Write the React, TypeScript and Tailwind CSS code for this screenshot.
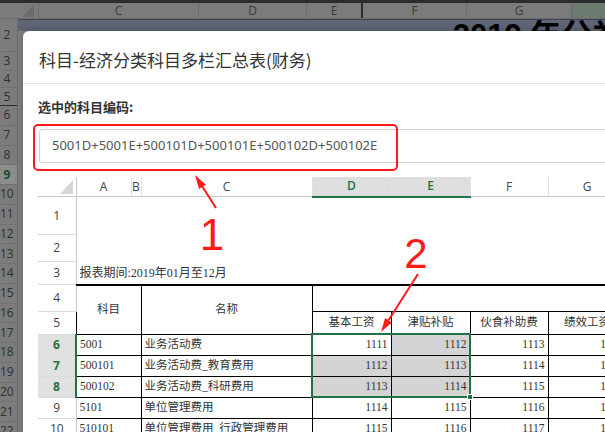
import type { ReactNode } from 'react';

const GREEN = '#217346';

const bgRows: { n: number; h: string; active?: boolean }[] = [
  { n: 2, h: 'h-[33px]' },
  { n: 3, h: 'h-[19px]' },
  { n: 4, h: 'h-[17px]' },
  { n: 5, h: 'h-[18px]' },
  ...Array.from({ length: 17 }, (_, i) => ({ n: 6 + i, h: 'h-[19.75px]', active: 6 + i === 9 })),
];

const dataRows = [
  { code: '5001', name: '业务活动费', vals: [1111, 1112, 1113, 1114], sel: true },
  { code: '500101', name: '业务活动费_教育费用', vals: [1112, 1113, 1114, 1115], sel: true },
  { code: '500102', name: '业务活动费_科研费用', vals: [1113, 1114, 1115, 1116], sel: true },
  { code: '5101', name: '单位管理费用', vals: [1114, 1115, 1116, 1117], sel: false },
  { code: '510101', name: '单位管理费用_行政管理费用', vals: [1115, 1116, 1117, 1118], sel: false },
];

function RowHead({ children, active }: { children: ReactNode; active?: boolean }) {
  return (
    <th
      className={`p-0 text-center text-[12px] font-['Open_Sans',sans-serif] border-b border-[#dcdcdc] ${
        active
          ? 'bg-[#e1e1e1] text-[#217346] font-bold border-r-2 border-r-[#217346]'
          : 'bg-white text-[#444] font-normal border-r border-r-[#c8c8c8]'
      }`}
    >
      {children}
    </th>
  );
}

function ColHead({ children, active }: { children: ReactNode; active?: boolean }) {
  return (
    <th
      className={`p-0 text-center text-[12px] font-['Open_Sans',sans-serif] border-r border-r-[#e2e2e2] ${
        active
          ? 'bg-[#dedede] text-[#217346] font-semibold border-b-2 border-b-[#217346]'
          : 'bg-white text-[#444] font-normal border-b border-b-[#c8c8c8]'
      }`}
    >
      {children}
    </th>
  );
}

function EmbeddedSheet() {
  return (
    <div className="relative ml-[15px] mt-[14px] w-[600px]">
      <table className="table-fixed border-collapse w-[588px] font-['Liberation_Serif','Noto_Sans_CJK_SC',serif] text-[11.5px] text-[#333]">
        <colgroup>
          <col className="w-[38px]" />
          <col className="w-[55px]" />
          <col className="w-[10px]" />
          <col className="w-[171px]" />
          <col className="w-[79px]" />
          <col className="w-[79px]" />
          <col className="w-[78px]" />
          <col className="w-[78px]" />
        </colgroup>
        <tbody>
          <tr className="h-[19px]">
            <th className="p-0 bg-white border-r border-r-[#c8c8c8] border-b border-b-[#c8c8c8]">
              <div className="flex justify-end items-end h-[19px] pr-[3px] pb-[2px]">
                <svg width="13" height="14" viewBox="0 0 13 14">
                  <polygon points="13,0 13,14 0,14" fill="#d6d6d6" />
                </svg>
              </div>
            </th>
            <ColHead>A</ColHead>
            <ColHead>B</ColHead>
            <ColHead>C</ColHead>
            <ColHead active>D</ColHead>
            <ColHead active>E</ColHead>
            <ColHead>F</ColHead>
            <ColHead>G</ColHead>
          </tr>
          <tr className="h-[38px]">
            <RowHead>1</RowHead>
            <td colSpan={7} className="p-0 bg-white" />
          </tr>
          <tr className="h-[27px]">
            <RowHead>2</RowHead>
            <td colSpan={7} className="p-0 bg-white" />
          </tr>
          <tr className="h-[23px]">
            <RowHead>3</RowHead>
            <td colSpan={7} className="p-0 pl-[3px] bg-white border-b-2 border-black text-[12px] whitespace-nowrap">
              报表期间:2019年01月至12月
            </td>
          </tr>
          <tr className="h-[27px]">
            <RowHead>4</RowHead>
            <td colSpan={2} rowSpan={2} className="p-0 text-center border border-black bg-white">
              科目
            </td>
            <td rowSpan={2} className="p-0 text-center border border-black bg-white">
              名称
            </td>
            <td colSpan={4} className="p-0 border border-black bg-white" />
          </tr>
          <tr className="h-[23px]">
            <RowHead>5</RowHead>
            {['基本工资', '津贴补贴', '伙食补助费', '绩效工资'].map(t => (
              <td key={t} className="p-0 text-center border border-black bg-white whitespace-nowrap overflow-hidden">
                {t}
              </td>
            ))}
          </tr>
          {dataRows.map((r, ri) => (
            <tr key={r.code} className="h-[21px]">
              <RowHead active={r.sel}>{6 + ri}</RowHead>
              <td colSpan={2} className="p-0 pl-[3px] border border-black bg-white">
                {r.code}
              </td>
              <td className="p-0 pl-[3px] border border-black bg-white whitespace-nowrap">{r.name}</td>
              {r.vals.map((v, vi) => {
                const shaded = r.sel && vi < 2 && !(ri === 0 && vi === 0);
                return (
                  <td
                    key={vi}
                    className={`p-0 pr-[3px] text-right border border-black ${shaded ? 'bg-[#d4d4d4]' : 'bg-white'}`}
                  >
                    {v}
                  </td>
                );
              })}
            </tr>
          ))}
        </tbody>
      </table>
      {/* selection D6:E8 */}
      <div className="absolute left-[273px] top-[156px] w-[160px] h-[65px] border-2 border-[#217346]" />
      <div className="absolute left-[429px] top-[217px] w-[6px] h-[6px] bg-[#217346] border border-white" />
    </div>
  );
}

function Background() {
  return (
    <div className="flex flex-col h-full">
      <div className="h-[3px] bg-[#2c2c2c]" />
      <div className="flex h-[16px] bg-[#7b7b7b] text-[#3a3a3a] text-[12px] leading-[16px] font-['Open_Sans',sans-serif] border-b border-[#6c6c6c]">
        <div className="w-[39px] flex justify-end items-end pr-[4px] pb-[1px] border-r border-[#6c6c6c]">
          <svg width="12" height="13" viewBox="0 0 12 13">
            <polygon points="12,0 12,13 0,13" fill="#6c6c6c" />
          </svg>
        </div>
        <div className="w-[160px] text-center border-r border-[#6c6c6c]">C</div>
        <div className="w-[108px] text-center border-r border-[#6c6c6c]">D</div>
        <div className="w-[56px] text-center border-r-2 border-[#2e2e2e]">E</div>
        <div className="w-[104px] text-center border-r border-[#6c6c6c]">F</div>
        <div className="w-[105px] text-center border-r border-[#6c6c6c]">G</div>
        <div className="flex-1 bg-[#6d7a6f]" />
      </div>
      <div className="flex flex-1 min-h-0">
        <div className="w-[3px] bg-gradient-to-b from-[#9a7280] via-[#8a7a6a] to-[#5f6f8a]" />
        <div className="w-[36px] flex flex-col bg-[#7c7c7c] border-r border-[#6c6c6c]">
          {bgRows.map(r => (
            <div
              key={r.n}
              className={`${r.h} shrink-0 flex items-center justify-center pr-[3px] text-[12px] font-['Open_Sans',sans-serif] border-b ${
                r.n === 5 ? 'border-[#2e2e2e]' : 'border-[#717171]'
              } ${r.active ? 'bg-[#8d8d8d] text-[#1d4a2a] font-bold' : 'text-[#2f2f2f]'}`}
            >
              {r.n}
            </div>
          ))}
        </div>
        <div className="flex-1 flex flex-col bg-[#808080]">
          <div className="h-[12px] overflow-hidden bg-[#5f6676] border-t border-[#3d4350]">
            <div className="pl-[435px] whitespace-nowrap leading-none text-[31px] font-bold text-black font-['Liberation_Sans','Noto_Sans_CJK_SC',sans-serif]">
              2019 年分类
            </div>
          </div>
        </div>
      </div>
    </div>
  );
}

function Annotations() {
  return (
    <svg className="absolute inset-0 pointer-events-none" width="605" height="432" viewBox="0 0 605 432">
      <rect x="34" y="125" width="363" height="45" rx="4" fill="none" stroke="#ff1a1a" strokeWidth="2" />
      <line x1="216" y1="208" x2="202.5" y2="186.8" stroke="#ff1a1a" strokeWidth="2" />
      <polygon points="195,175 205.9,184.7 199.1,189" fill="#ff1a1a" />
      <line x1="418" y1="274" x2="388.5" y2="320.2" stroke="#ff1a1a" strokeWidth="2" />
      <polygon points="381,332 391.9,322.4 385.1,318" fill="#ff1a1a" />
      <text x="212" y="250" textAnchor="middle" fontSize="44" fill="#ff1a1a" fontFamily="Liberation Sans, Arial, sans-serif">
        1
      </text>
      <text x="416" y="268" textAnchor="middle" fontSize="42" fill="#ff1a1a" fontFamily="Liberation Sans, Arial, sans-serif">
        2
      </text>
    </svg>
  );
}

export default function App() {
  return (
    <div className="relative w-[605px] h-[432px] overflow-hidden bg-[#808080]">
      <Background />

      {/* dialog */}
      <div className="absolute left-[23px] top-[31px] w-[600px] h-[420px] bg-white rounded-tl-[6px] shadow-[0_0_8px_rgba(0,0,0,0.25)] overflow-hidden">
        <div className="h-[53px] pt-[5px] pl-[16px] flex items-center border-b border-[#e6e6e6] text-[17px] text-[#333] font-['Noto_Sans_CJK_SC',sans-serif]">
          科目-经济分类科目多栏汇总表(财务)
        </div>
        <div className="mt-[14px] pl-[15px] text-[13px] leading-[18px] font-bold text-[#333] font-['Noto_Sans_CJK_SC',sans-serif]">
          选中的科目编码:
        </div>
        <div className="mt-[13px] ml-[16px] w-[600px] h-[34px] flex items-center pl-[12px] border border-[#d2d2d2] rounded-[3px] text-[13px] text-[#555] font-['Noto_Sans','Noto_Sans_CJK_SC',sans-serif]">
          5001D+5001E+500101D+500101E+500102D+500102E
        </div>
        <EmbeddedSheet />
      </div>

      <Annotations />
    </div>
  );
}
